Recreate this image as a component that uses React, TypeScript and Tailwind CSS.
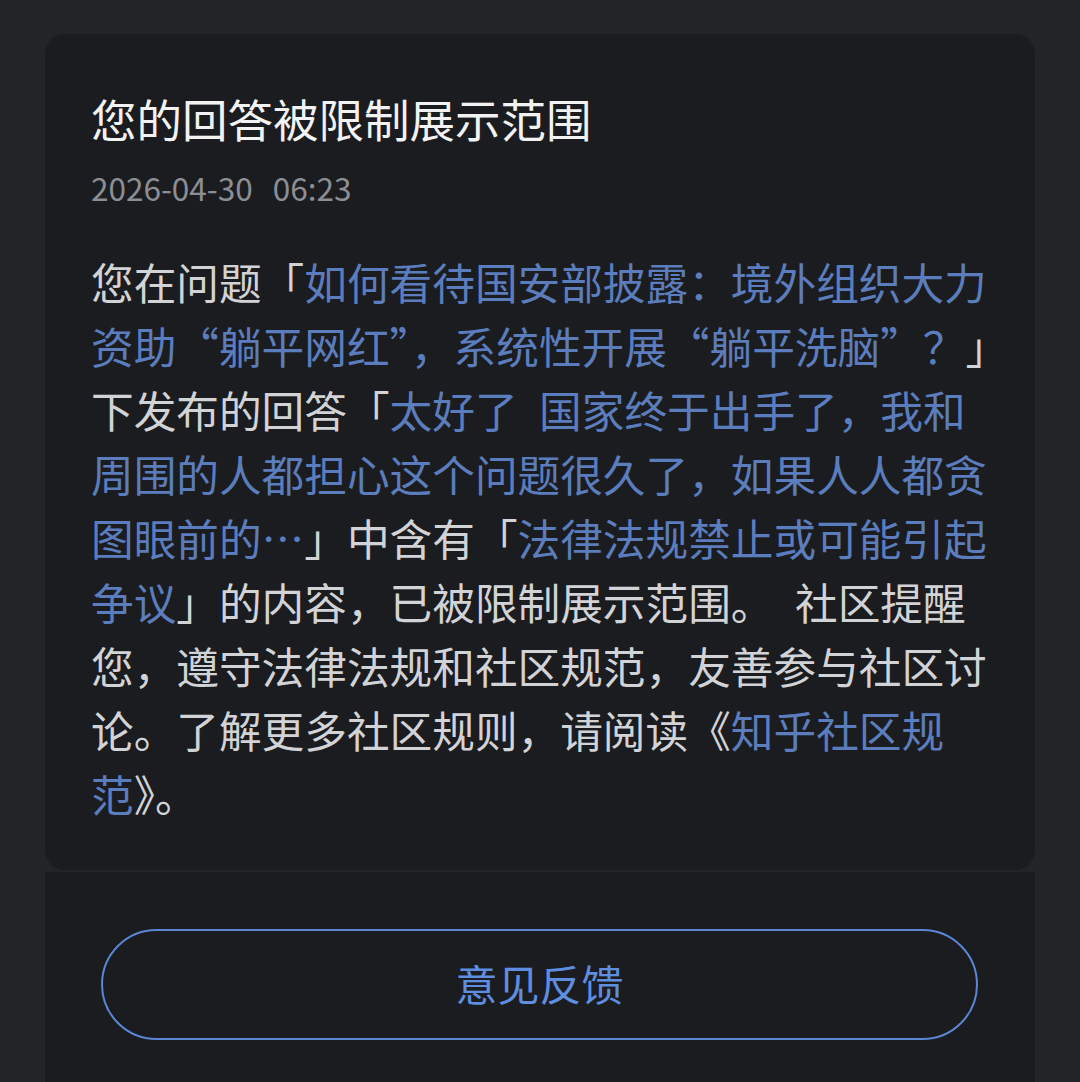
const link = 'text-[#5b7dbd]';

export default function App() {
  return (
    <div
      lang="zh-CN"
      className="min-h-[1082px] w-[1080px] bg-[#222428] pt-[34px] font-['Noto_Sans_CJK_SC','Noto_Sans',sans-serif]"
    >
      <div className="ml-[45px] w-[990px] rounded-[20px] bg-[#1b1c1f] pl-[46px] pr-[48px] pt-[55px] pb-[44px]">
        <h1 className="text-[45.5px] leading-[58px] font-normal text-[#f2f2f3]">您的回答被限制展示范围</h1>
        <p className="mt-[20px] text-[31.5px] leading-[40px] text-[#8b8e94] [word-spacing:3px]">
          2026-04-30&nbsp;&nbsp;06:23
        </p>
        <p className="mt-[43px] w-[897px] text-[42.67px] leading-[64px] text-[#d2d3d7] [word-spacing:12px]">
          您在问题「<span className={link}>如何看待国安部披露：境外组织大力资助“躺平网红”，系统性开展“躺平洗脑”？</span>」下发布的回答「
          <span className={link}>太好了 国家终于出手了，我和周围的人都担心这个问题很久了，如果人人都贪图眼前的…</span>」中含有「
          <span className={link}>法律法规禁止或可能引起争议</span>」的内容，已被限制展示范围。 社区提醒您，遵守法律法规和社区规范，友善参与社区讨论。了解更多社区规则，请阅读《
          <span className={link}>知乎社区规范</span>》。
        </p>
      </div>
      <div className="ml-[45px] mt-[2px] h-[210px] w-[990px] bg-[#1b1c1f] px-[56px] pt-[57px]">
        <button className="flex h-[111px] w-[877px] items-center justify-center rounded-full border-2 border-[#5b86d4] pb-[4px] text-[42px] text-[#5f8ee0]">
          意见反馈
        </button>
      </div>
    </div>
  );
}
